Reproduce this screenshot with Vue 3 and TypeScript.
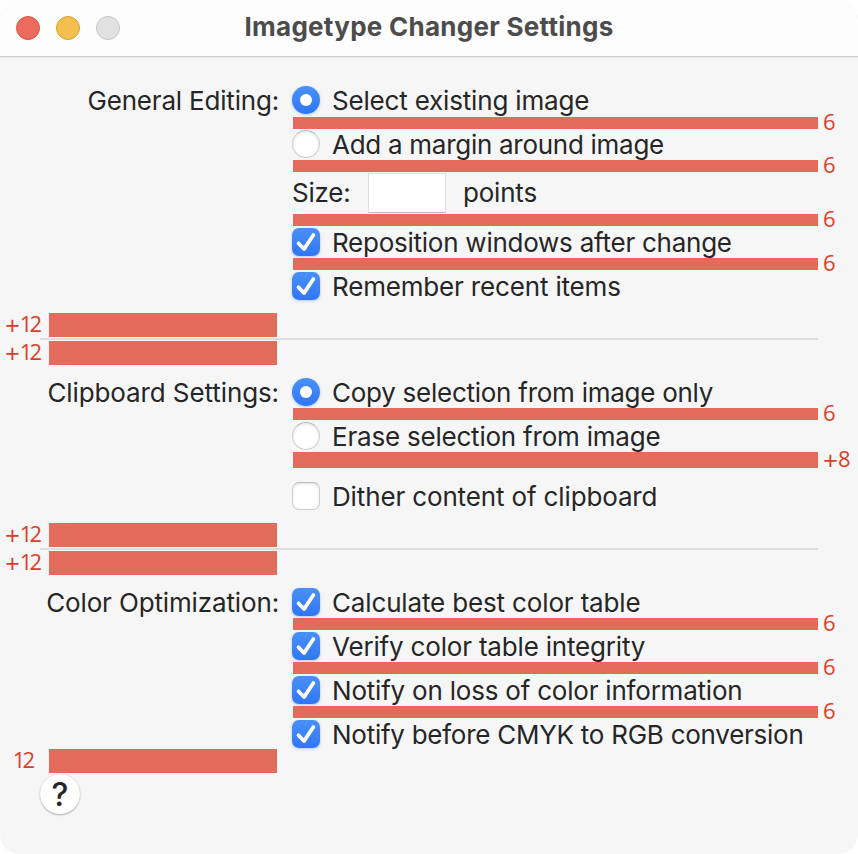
<script setup lang="ts">
interface Option {
  kind: 'radio' | 'check' | 'size'
  text: string
  /** letter spacing in hundredths of a pixel */
  track: number
  on?: boolean
  gap?: string
}

interface Section {
  title: string
  track: number
  options: Option[]
}

const sections: Section[] = [
  {
    title: 'General Editing:',
    track: -19,
    options: [
      { kind: 'radio', text: 'Select existing image', track: -18, on: true, gap: '6' },
      { kind: 'radio', text: 'Add a margin around image', track: -28, gap: '6' },
      { kind: 'size', text: 'Size:', track: -20, gap: '6' },
      { kind: 'check', text: 'Reposition windows after change', track: -25, on: true, gap: '6' },
      { kind: 'check', text: 'Remember recent items', track: -17, on: true },
    ],
  },
  {
    title: 'Clipboard Settings:',
    track: -10,
    options: [
      { kind: 'radio', text: 'Copy selection from image only', track: -26, on: true, gap: '6' },
      { kind: 'radio', text: 'Erase selection from image', track: -21, gap: '+8' },
      { kind: 'check', text: 'Dither content of clipboard', track: -14 },
    ],
  },
  {
    title: 'Color Optimization:',
    track: -14,
    options: [
      { kind: 'check', text: 'Calculate best color table', track: -15, on: true, gap: '6' },
      { kind: 'check', text: 'Verify color table integrity', track: -18, on: true, gap: '6' },
      { kind: 'check', text: 'Notify on loss of color information', track: -21, on: true, gap: '6' },
      { kind: 'check', text: 'Notify before CMYK to RGB conversion', track: -26, on: true },
    ],
  },
]

const tracking = (track: number) => ({ letterSpacing: `${track / 100}px` })
</script>

<template>
  <div class="window">
    <header class="titlebar">
      <div class="lights">
        <span class="light red"></span>
        <span class="light yellow"></span>
        <span class="light gray"></span>
      </div>
      <h1 class="title">Imagetype Changer Settings</h1>
    </header>

    <main class="content">
      <template v-for="(section, s) in sections" :key="section.title">
        <section class="section">
          <div class="heading" :style="tracking(section.track)">{{ section.title }}</div>
          <div class="options">
            <template v-for="(option, i) in section.options" :key="option.text">
              <div v-if="option.kind === 'size'" class="size-row" :style="tracking(option.track)">
                <span class="size-label">{{ option.text }}</span>
                <span class="field"></span>
                <span>points</span>
              </div>
              <div v-else class="option">
                <span class="control" :class="[option.kind, { on: option.on }]">
                  <svg v-if="option.kind === 'check' && option.on" width="28" height="28" viewBox="0 0 28 28">
                    <path d="M6.5 15.3 L12 21.1 L21.4 7" fill="none" stroke="#fff" stroke-width="3.7" stroke-linecap="round" stroke-linejoin="round" />
                  </svg>
                </span>
                <span :style="tracking(option.track)">{{ option.text }}</span>
              </div>
              <div
                v-if="option.gap"
                class="spacer"
                :class="{ tall: option.gap === '+8', 'before-field': s === 0 && i === 1, 'after-field': option.kind === 'size', first: s === 0 && i === 0 }"
              >
                <span class="bar"></span>
                <span class="note"><span v-if="option.gap.startsWith('+')" class="plus">+</span>{{ option.gap.replace('+', '') }}</span>
              </div>
            </template>
          </div>
        </section>

        <div v-if="s < sections.length - 1" class="divider">
          <div class="side-spacer">
            <span class="note"><span class="plus">+</span><span class="twelve">12</span></span><span class="bar"></span>
          </div>
          <div class="rule"></div>
          <div class="side-spacer">
            <span class="note"><span class="plus">+</span><span class="twelve">12</span></span><span class="bar"></span>
          </div>
        </div>
      </template>

      <div class="side-spacer last">
        <span class="note"><span class="twelve">12</span></span><span class="bar"></span>
      </div>
      <div class="help">?</div>
    </main>
  </div>
</template>

<style>
body {
  background: #fff;
}
</style>

<style scoped>
.window {
  box-sizing: border-box;
  width: 858px;
  height: 854px;
  overflow: hidden;
  border-radius: 20px;
  background: #f6f6f6;
  color: #262626;
  font: 400 26px/28px Inter, 'Liberation Sans', sans-serif;
  white-space: nowrap;
}

.titlebar {
  box-sizing: border-box;
  display: grid;
  grid-template-columns: 120px 1fr 120px;
  align-items: center;
  height: 57px;
  background: #fdfdfd;
  border-bottom: 1px solid #cfcfcf;
  box-shadow: 0 1px 0 #ebebeb;
}

.lights {
  display: flex;
  gap: 16px;
  padding-left: 16px;
}

.light {
  box-sizing: border-box;
  width: 24px;
  height: 24px;
  border-radius: 50%;
  border: 1px solid;
}

.red {
  background: #ed6a5f;
  border-color: #d75549;
}

.yellow {
  background: #f5bf4f;
  border-color: #d8a13a;
}

.gray {
  background: #e2e2e2;
  border-color: #c3c3c3;
}

.title {
  margin: 0;
  padding-bottom: 2px;
  text-align: center;
  font-size: 26px;
  line-height: 28px;
  font-weight: 700;
  letter-spacing: 0.27px;
  color: #4c4c4c;
}

.content {
  padding-top: 29px;
}

.section {
  display: grid;
  grid-template-columns: 279px 1fr;
  column-gap: 13px;
}

.heading {
  text-align: right;
  line-height: 29px;
}

.option {
  display: flex;
  align-items: center;
  gap: 12px;
  height: 28px;
  line-height: 29px;
}

.control {
  box-sizing: border-box;
  flex: none;
  width: 28px;
  height: 28px;
  background: #fff;
  border: 1px solid #cecece;
  border-top-color: #bdbdbd;
  box-shadow: inset 0 1px 3px rgba(0, 0, 0, 0.13);
}

.radio {
  border-radius: 50%;
}

.check {
  border-radius: 7px;
}

.control.on {
  display: flex;
  align-items: center;
  justify-content: center;
  border: 0;
  background: linear-gradient(#4991f8, #3076f6);
  box-shadow: 0 1px 3px rgba(48, 118, 246, 0.35);
}

.radio.on::after {
  content: '';
  width: 12px;
  height: 12px;
  border-radius: 50%;
  background: #fff;
}

.size-row {
  display: flex;
  align-items: center;
  height: 40px;
}

.size-label {
  width: 76px;
}

.field {
  box-sizing: border-box;
  width: 78px;
  height: 40px;
  margin-right: 17px;
  background: #fff;
  border: 1px solid #e0e0e0;
  border-bottom-color: #b9b9b9;
}

.spacer {
  display: flex;
  align-items: center;
  gap: 5px;
  height: 12px;
  margin: 2px 0 2px 1px;
}

.spacer.first {
  margin-top: 3px;
  margin-bottom: 1px;
}

.spacer.before-field {
  margin-bottom: 1px;
}

.spacer.after-field {
  margin-top: 1px;
}

.spacer.tall {
  height: 16px;
  margin-bottom: 14px;
}

.bar {
  flex: none;
  background: #e26b5b;
}

.spacer .bar {
  width: 525px;
  height: 100%;
}

.note {
  padding-bottom: 3px;
  font: 400 22px/21px 'Open Sans', 'Noto Sans', sans-serif;
  color: #dc3e2a;
}

.plus {
  font-size: 26px;
  line-height: 0;
  vertical-align: -2.5px;
}

.twelve {
  margin-right: 3px;
  letter-spacing: -3px;
}

.divider {
  display: flex;
  flex-direction: column;
  gap: 1px;
  padding: 13px 0;
}

.side-spacer {
  display: grid;
  grid-template-columns: 42px 228px;
  column-gap: 7px;
  height: 24px;
}

.side-spacer .note {
  text-align: right;
}

.rule {
  width: 778px;
  height: 2px;
  margin-left: 40px;
  background: #dedede;
}

.last {
  margin-top: 1px;
}

.last .note {
  padding-right: 7px;
}

.help {
  width: 40px;
  height: 40px;
  margin: 1px 0 0 40px;
  border-radius: 50%;
  background: #fff;
  box-shadow: 0 1px 2px rgba(0, 0, 0, 0.28), 0 0 1px rgba(0, 0, 0, 0.2);
  text-align: center;
  font-size: 32px;
  line-height: 41px;
  font-weight: 500;
}
</style>
